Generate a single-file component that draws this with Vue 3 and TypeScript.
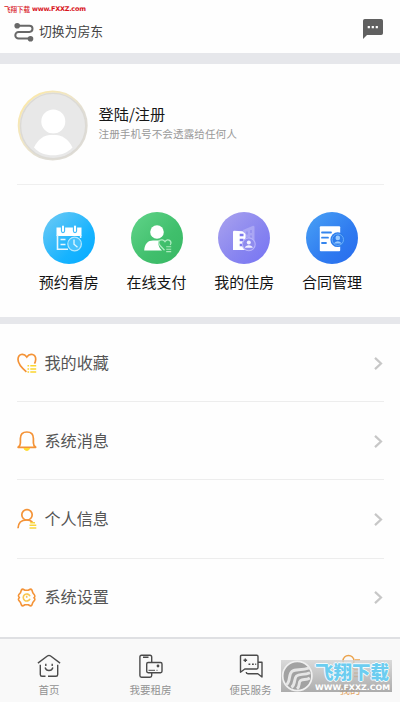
<script setup lang="ts">
interface Item { id: string; label: string }

const services: Item[] = [
  { id: 'booking', label: '预约看房' },
  { id: 'payment', label: '在线支付' },
  { id: 'house', label: '我的住房' },
  { id: 'contract', label: '合同管理' },
]
const rows: Item[] = [
  { id: 'favorite', label: '我的收藏' },
  { id: 'message', label: '系统消息' },
  { id: 'profile', label: '个人信息' },
  { id: 'settings', label: '系统设置' },
]
const tabs: Item[] = [
  { id: 'home', label: '首页' },
  { id: 'rent', label: '我要租房' },
  { id: 'service', label: '便民服务' },
  { id: 'mine', label: '我的' },
]
</script>

<template>
  <div class="page">
    <header class="topbar">
      <span class="site-mark">飞翔下载 <b>www.FXXZ.com</b></span>
      <div class="switch">
        <svg width="20" height="20" viewBox="0 0 20 20" fill="none" stroke="#686868" stroke-width="2">
          <path d="M3 3.7H15.4a3.1 3.1 0 0 1 0 6.2H4.6a3.3 3.3 0 0 0 0 6.6H16" />
          <circle cx="3.2" cy="3.7" r="2.8" fill="#686868" stroke="none" />
          <circle cx="16.5" cy="16.8" r="2.8" fill="#686868" stroke="none" />
        </svg>
        <span>切换为房东</span>
      </div>
      <svg class="chat" width="20" height="20" viewBox="0 0 20 20">
        <path d="M1.8 0H18.2Q20 0 20 1.8V14.2Q20 16 18.2 16H4L0 20V1.8Q0 0 1.8 0Z" fill="#606060" />
        <path d="M4.7 7h2.2v2.2H4.7zM8.7 7h2.2v2.2H8.7zM12.7 7h2.2v2.2h-2.2z" fill="#fff" />
      </svg>
    </header>

    <section class="account">
      <div class="user">
        <svg class="avatar" width="72" height="72" viewBox="0 0 72 72">
          <defs>
            <linearGradient id="ring" x1="0" y1="0" x2="1" y2="1">
              <stop offset="0" stop-color="#ffe9a0" /><stop offset=".4" stop-color="#f0e6c6" /><stop offset=".65" stop-color="#e0ddd5" />
            </linearGradient>
          </defs>
          <circle cx="35.7" cy="35.5" r="34" fill="#e8e8e8" stroke="url(#ring)" stroke-width="2" />
          <circle cx="36.1" cy="36" r="32.6" fill="none" stroke="#dcdad5" stroke-width="1.4" />
          <circle cx="36.3" cy="31.5" r="12" fill="#fff" />
          <path d="M17 57.5C21 49 27 44.7 36 44.7S51.5 49 55.5 57.5C50 63 44 65.3 36 65.3S22 63 17 57.5Z" fill="#fff" />
          <path d="M27 42.2Q36 46.4 45.5 42.2" fill="none" stroke="#e8e8e8" stroke-width="1.2" />
        </svg>
        <div class="user-text">
          <div class="login">登陆/注册</div>
          <div class="hint">注册手机号不会透露给任何人</div>
        </div>
      </div>

      <div class="services">
        <div v-for="s in services" :key="s.id" class="service">
          <div class="disc" :class="`disc-${s.id}`">
            <svg v-if="s.id === 'booking'" width="52" height="52" viewBox="0 0 52 52" fill="none">
              <path d="M13.5 15.5H38.5V24H13.5Z" fill="#fff" />
              <path d="M14.5 23V37.3H25M17.5 27.5H22.5M17.5 32.5H22.5M37.6 23v3" stroke="#e4f7ff" stroke-width="1.6" />
              <path d="M20 15v4M32 15v4" stroke="#42bcfa" stroke-width="4.3" stroke-linecap="round" />
              <path d="M20 14.5v4.5M32 14.5v4.5" stroke="#fff" stroke-width="2" stroke-linecap="round" />
              <circle cx="31.6" cy="32" r="8" fill="#1bb3fb" />
              <circle cx="31.6" cy="32" r="6.8" fill="#48c2fd" stroke="#b3e8ff" stroke-width="1.2" />
              <path d="M31 27.5V32.2L34.5 35.2" stroke="#e2f7ff" stroke-width="1.3" />
            </svg>
            <svg v-else-if="s.id === 'payment'" width="52" height="52" viewBox="0 0 52 52" fill="none">
              <circle cx="26" cy="20" r="6.8" fill="#fff" />
              <path d="M13.2 38.5C13.7 31.5 17 28.5 22 28.5H28.5C26.5 31.5 27.5 35 31 38.5Z" fill="#fff" />
              <path d="M33.5 38.2L29.5 34C24.5 28.8 31.2 25.5 34 29.7C37 25.5 41.5 29.3 39.2 33" stroke="#b1ecc4" stroke-width="1.3" />
              <path d="M35.2 34.8h5M35.2 37.3h5M35.2 39.6h5" stroke="#abe9bd" stroke-width="1.1" />
            </svg>
            <svg v-else-if="s.id === 'house'" width="52" height="52" viewBox="0 0 52 52" fill="none">
              <path d="M25 18L35 13.7Q36.5 13.5 36.5 15V36H25Z" fill="#aaa6f4" />
              <path d="M29 19.5v3M33 18v3M29 25v2M33 23.5v3" stroke="#918dee" stroke-width="1.5" />
              <path d="M15 20Q15 18.8 16.2 18.8L24.5 19.3L27.5 22V38H15Z" fill="#fff" />
              <path d="M21.7 23h3.8M21.7 28h3.8M21.7 33h3" stroke="#7e7aed" stroke-width="2.7" />
              <circle cx="30.8" cy="32.3" r="6.4" fill="#8f8bee" stroke="#b7b3fa" stroke-width="1.1" />
              <circle cx="30.8" cy="30.4" r="2" fill="#f1f0ff" />
              <path d="M26.8 35.8C27.4 32.4 34.2 32.4 34.8 35.8Z" fill="#f1f0ff" />
            </svg>
            <svg v-else width="52" height="52" viewBox="0 0 52 52" fill="none">
              <rect x="13.8" y="14.2" width="20.4" height="25" rx="1" fill="#fff" />
              <path d="M16 20.5h9M16 25.7h6M16 31h4" stroke="#3585ee" stroke-width="1.8" stroke-linecap="round" />
              <circle cx="31.8" cy="27.7" r="7.4" fill="#2d7ceb" />
              <circle cx="31.8" cy="27.7" r="5.7" stroke="#68adfb" stroke-width="1" />
              <circle cx="31.8" cy="25.9" r="2.3" fill="#9acbff" />
              <path d="M27.8 31.5Q31.8 27.2 35.8 31.5Z" fill="#9acbff" />
            </svg>
          </div>
          <span>{{ s.label }}</span>
        </div>
      </div>
    </section>

    <nav class="list">
      <div v-for="r in rows" :key="r.id" class="row">
        <svg class="row-icon" width="20" height="22" viewBox="0 0 20 22" fill="none" stroke="#f49337" stroke-width="1.7">
          <template v-if="r.id === 'favorite'">
            <path d="M9.4 19.8C3.3 14.8 1 11.5 1 7.6C1 2 6.5.5 9.8 5C13 .5 18.9 2 18.7 7.5C18.6 9 18.2 10.4 17.5 11.7" />
            <path d="M10.5 13.8h1.6M13.3 13.8H19.2M10.5 17h1.6M13.3 17H19.2M10.5 20h1.6M13.3 20H19.2" stroke="#fbd52f" stroke-width="1.6" />
          </template>
          <template v-else-if="r.id === 'message'">
            <path d="M1.1 17.3Q3.4 15.6 3.4 13V8.5C3.4 4.2 6 2 9.9 2S16.4 4.2 16.4 8.5V13Q16.4 15.6 18.7 17.3Z" stroke-linejoin="round" />
            <path d="M6.8 18.6Q9.8 22.3 12.8 18.6Z" fill="#fedb2c" stroke="#fedb2c" stroke-width="1" />
          </template>
          <template v-else-if="r.id === 'profile'">
            <circle cx="10" cy="6.8" r="5.2" />
            <path d="M1 20.3C1.2 15 4.4 12 9.7 12Q13.2 12 15.4 14" />
            <path d="M13.2 14.7H18M12.5 17.3H19.3M12.5 20H19.3" stroke="#f9d53c" stroke-width="1.5" />
          </template>
          <template v-else>
            <path d="M6.2 3.2L8 4.3H11.3L13.1 3.2Q14.2 3 14.9 4L15.8 6.7L17.4 8.9Q18.2 10 17.7 11L16.9 11.8L17.7 12.6Q18.2 13.5 17.4 14.6L15.8 16.5L14.9 19Q14.2 20 13.1 19.8L11.3 18.7H8L6.2 19.8Q5 20 4.4 19L3.5 16.5L1.9 14.6Q1.1 13.5 1.6 12.6L2.4 11.5L1.6 10.4Q1.1 9.5 1.9 8.5L3.5 6.7L4.4 4Q5 3 6.2 3.2Z" stroke-width="1.6" stroke-linejoin="round" />
            <path d="M13 10.2A3.5 3.5 0 1 0 13 12.8M9.7 9.7V11.8" stroke="#f8c64f" stroke-width="1.6" />
          </template>
        </svg>
        <span>{{ r.label }}</span>
        <svg class="arrow" width="9" height="13" viewBox="0 0 9 13" fill="none" stroke="#c7c7c7" stroke-width="2.2"><path d="M1 .9L7 6.5L1 12.1" /></svg>
      </div>
    </nav>

    <footer class="tabs">
      <div v-for="t in tabs" :key="t.id" class="tab" :class="`tab-${t.id}`">
        <svg width="24" height="24" viewBox="0 0 24 24" fill="none" stroke="#4b4b4b" stroke-width="1.4" stroke-linejoin="round">
          <template v-if="t.id === 'home'">
            <path d="M.9 9.1L10.7 1.8Q12 1 13.3 1.8L23.1 9.1M3.3 10.7V20.5Q3.3 22.3 5 22.3H8.5M11 22.3H19Q20.7 22.3 20.7 20.5V10.7" />
            <path d="M8.8 9.7v2.3M15.2 9.7v2.3M8.1 13.5Q9 16.5 12 16.5T15.9 13.5" />
          </template>
          <template v-else-if="t.id === 'rent'">
            <path d="M12.7 8V3Q12.7 1.2 11 1.2H2.5Q.9 1.2.9 3V21.6Q.9 23.3 2.5 23.3H11Q12.7 23.3 12.7 21.6V19M4 3.3h5.5" />
            <rect x="7.7" y="8.5" width="15.3" height="10.2" rx="1.4" />
            <path d="M9.5 16.3H16M17.5 16.3h1" stroke-width="1" /><circle cx="19" cy="12" r="1.4" fill="#4b4b4b" stroke="none" />
          </template>
          <template v-else-if="t.id === 'service'">
            <path d="M2.7 1.3H17.8Q19 1.3 19 2.5V13.6Q19 15 17.8 15H5.8L1.5 18.2V2.5Q1.5 1.3 2.7 1.3ZM19 8.2H23V23L18.8 19.7H9Q7.2 19.7 7.2 18" />
            <path d="M4.5 6.2h3.6M6.3 4.4V8M9.5 10.3h1.8M13 10.3h1.8M16.2 10.3h1" />
          </template>
          <g v-else stroke="#eba34d">
            <circle cx="10.5" cy="7" r="5.5" /><path d="M1 23C1.3 16 4.5 13 10.5 13Q14 13 16 15M17 6h5M16 15.5h7M16 19h7M16 22.5h7" />
          </g>
        </svg>
        <span>{{ t.label }}</span>
      </div>
      <div class="watermark">
        <svg width="33" height="32" viewBox="0 0 33 32" fill="none">
          <circle cx="16.3" cy="16" r="14.6" fill="#a2a2a2" stroke="#f0f0f0" stroke-width="1.7" />
          <path d="M5 25C10 22 7 14.5 11 11.3C14.5 8.5 20 11 28.5 7.8M10.5 27.5C15 24 12.5 18.7 15.5 16C18.5 13.4 23 15.5 29 12.7M16 28.8C19.5 26 17 22.7 19.5 20.7C22 18.7 25 20.5 28.8 18" stroke="#e6e6e6" stroke-width="2.9" />
        </svg>
        <div class="mark-copy">
          <strong>飞翔下载</strong>
          <svg width="76" height="10" viewBox="0 0 76 10">
            <text x="0" y="7.7" textLength="75" lengthAdjust="spacingAndGlyphs">WWW.FXXZ.COM</text>
          </svg>
        </div>
      </div>
    </footer>
  </div>
</template>

<style>
body { margin: 0; background: #fff; }
</style>

<style scoped>
.page { width: 400px; height: 702px; display: flex; flex-direction: column; overflow: hidden; background: #fefefe; font-family: "Noto Sans CJK SC", sans-serif; }
.page * { box-sizing: border-box; }
svg { display: block; flex: none; }
.topbar { position: relative; height: 64px; flex: none; display: flex; justify-content: space-between; align-items: flex-start; padding: 19px 17px 0 14px; border-bottom: 11px solid #e6e7eb; }
.site-mark { position: absolute; left: 4px; top: 3px; display: flex; gap: 2px; font-size: 6.5px; line-height: 12px; font-weight: 500; color: #d8141c; white-space: nowrap; }
.site-mark b { font-family: "DejaVu Sans", sans-serif; font-size: 6.5px; font-weight: 700; letter-spacing: -.26px; }
.switch { display: flex; align-items: center; gap: 5px; padding-top: 1px; height: 24px; color: #444; font-size: 12.8px; line-height: 20px; }
.switch span { margin-top: -2px; }
.account { height: 260px; flex: none; padding: 26px 16px 0 17px; border-bottom: 7px solid #e6e7eb; }
.user { height: 95px; display: flex; align-items: flex-start; border-bottom: 1px solid #efefef; }
.user-text { padding: 13px 0 0 9.5px; }
.login { font-size: 15.2px; line-height: 20px; color: #161616; }
.hint { font-size: 10.65px; line-height: 16px; margin-top: 3px; color: #999; }
.services { display: grid; grid-template-columns: repeat(4, 87.7px); padding: 27px 0 0 8px; }
.service { display: flex; flex-direction: column; align-items: center; gap: 7px; font-size: 15px; line-height: 22px; color: #141414; }
.disc { width: 52px; height: 52px; border-radius: 50%; }
.disc-booking { background: linear-gradient(135deg, #72cbf4, #16b3ff 65%, #05aaff); }
.disc-payment { background: linear-gradient(135deg, #61d48a, #40bf6c 60%, #38b864); }
.disc-house { background: linear-gradient(135deg, #aaa3ee, #8784f0 60%, #7774f4); }
.disc-contract { background: linear-gradient(135deg, #4aa2f5, #2f7bf0 60%, #286bed); }
.list { height: 313px; flex: none; padding: 0 16px 0 17px; }
.row { height: 78.2px; display: flex; align-items: center; border-bottom: 1px solid #ededed; font-size: 16.1px; color: #555; }
.row:last-child { border-bottom: 0; }
.row span { margin: -2px 0 0 7.5px; line-height: 24px; }
.arrow { margin: 2px 1px 0 auto; }
.row:last-child .row-icon, .row:last-child .arrow, .row:last-child span { transform: translateY(-1px); }
.tabs { position: relative; flex: 1; display: grid; grid-template-columns: 98px 105px 95px 104px; padding-top: 15px; background: #f9f9f9; border-top: 2px solid #dfe0e3; }
.tab { display: flex; flex-direction: column; align-items: center; font-size: 10.5px; line-height: 16px; gap: 4px; color: #929292; }
.tab-mine { color: #e2a360; }
.watermark { position: absolute; left: 281px; top: 21px; width: 111px; height: 32px; display: flex; background: linear-gradient(#d2d2d2c8, #9b9b9bd0); }
.mark-copy { display: flex; flex-direction: column; width: 78px; padding-left: 1px; }
.mark-copy strong { height: 22px; font-size: 18.5px; line-height: 22px; font-weight: 900; color: #6ccdf0; white-space: nowrap; text-shadow: -1px 0 #f4fbfd, 1px 0 #f4fbfd, 0 -1px #f4fbfd, 0 1px #f4fbfd; }
.mark-copy text { font-family: "DejaVu Sans", sans-serif; font-size: 7.4px; font-weight: 700; fill: #fff; }
</style>
